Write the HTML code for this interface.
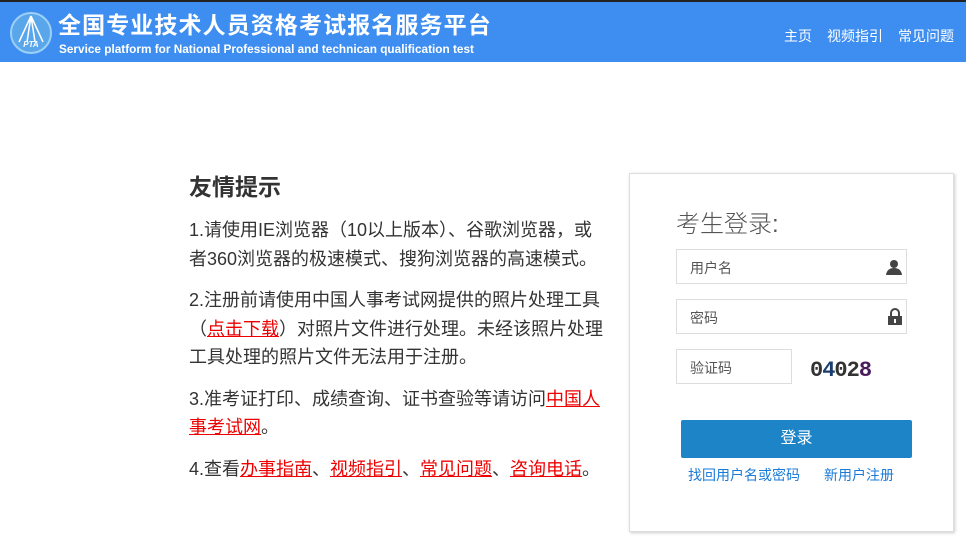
<!DOCTYPE html>
<html><head><meta charset="utf-8"><style>
*{margin:0;padding:0;box-sizing:border-box}
body{width:966px;height:550px;overflow:hidden;background:#fff;font-family:"Liberation Sans","Noto Sans CJK SC",sans-serif;position:relative}
.hd{position:absolute;left:0;top:0;width:966px;height:62px;background:#3e8ef1;border-top:2px solid #222}
.t1{position:absolute;left:58px;top:4px;color:#fff;font-size:23px;font-weight:bold;letter-spacing:1.1px;white-space:nowrap}
.t2{position:absolute;left:59px;top:40px;color:#fff;font-size:11.8px;font-weight:bold;white-space:nowrap}
.nav{position:absolute;top:24px;color:#fff;font-size:14px}
.logo{position:absolute;left:10px;top:10px}
.tip{position:absolute;left:189px;top:172px;width:420px;color:#333}
.tip h2{font-size:23px;font-weight:bold;margin-bottom:14px;line-height:30px}
.tip p{font-size:18px;line-height:28.5px;margin-bottom:13px}
.tip a{color:#e00;text-decoration:underline}
.box{position:absolute;left:629px;top:173px;width:325px;height:359px;border:1px solid #ddd;box-shadow:1px 1px 3px #ccc}
.ti{position:absolute;left:46px;top:30px;font-size:24px;color:#555;font-weight:300}
.in{position:absolute;left:46px;width:231px;height:35px;border:1px solid #ddd;font-size:14px;color:#555;padding:8px 0 0 13px}
.btn{position:absolute;left:51px;top:246px;width:231px;height:38px;background:#1e84c8;border-radius:2px;color:#fff;font-size:16px;text-align:center;line-height:38px}
.lk{position:absolute;top:291px;font-size:14px;color:#1a7ad8}
</style></head><body>
<div class="hd">
<svg class="logo" width="42" height="42" viewBox="0 0 42 42"><circle cx="21" cy="21" r="20" fill="#5aa6ea" stroke="#9cd0f6" stroke-width="2"/><path d="M21 4 L9 30 M21 4 L33 30 M21 4 L17 30 M21 4 L25 30" stroke="#fff" stroke-width="1.5" fill="none"/><text x="21" y="35" font-size="8" font-weight="bold" fill="#fff" text-anchor="middle" font-style="italic">PTA</text></svg>
<div class="t1">全国专业技术人员资格考试报名服务平台</div>
<div class="t2">Service platform for National Professional and technican qualification test</div>
<div class="nav" style="left:784px">主页</div>
<div class="nav" style="left:827px">视频指引</div>
<div class="nav" style="left:898px">常见问题</div>
</div>
<div class="tip">
<h2>友情提示</h2>
<p>1.请使用IE浏览器（10以上版本）、谷歌浏览器，或者360浏览器的极速模式、搜狗浏览器的高速模式。</p>
<p>2.注册前请使用中国人事考试网提供的照片处理工具（<a>点击下载</a>）对照片文件进行处理。未经该照片处理工具处理的照片文件无法用于注册。</p>
<p>3.准考证打印、成绩查询、证书查验等请访问<a>中国人事考试网</a>。</p>
<p>4.查看<a>办事指南</a>、<a>视频指引</a>、<a>常见问题</a>、<a>咨询电话</a>。</p>
</div>
<div class="box">
<div class="ti">考生登录:</div>
<div class="in" style="top:75px">用户名<svg style="position:absolute;right:4px;top:9px" width="16" height="16" viewBox="0 0 16 16"><circle cx="8" cy="5" r="4" fill="#444"/><path d="M0 16 Q1 9 8 9 Q15 9 16 16Z" fill="#444"/></svg></div>
<div class="in" style="top:125px">密码<svg style="position:absolute;right:4px;top:8px" width="14" height="17" viewBox="0 0 14 17"><path d="M3 8 V5 a4 4 0 0 1 8 0 V8" stroke="#444" stroke-width="2" fill="none"/><rect x="0" y="8" width="14" height="9" fill="#444"/><rect x="6" y="11" width="2" height="4" fill="#fff"/></svg></div>
<div class="in" style="top:175px;width:116px">验证码</div>
<div style="position:absolute;left:178px;top:180px;width:100px;height:34px;font:bold 22px 'Liberation Mono',monospace;letter-spacing:-1px;color:#333;padding:4px 0 0 2px">0<span style="color:#1a3c6e">4</span>02<span style="color:#4a1a5a">8</span></div>
<div class="btn">登录</div>
<div class="lk" style="left:58px">找回用户名或密码</div>
<div class="lk" style="left:194px">新用户注册</div>
</div>
</body></html>
